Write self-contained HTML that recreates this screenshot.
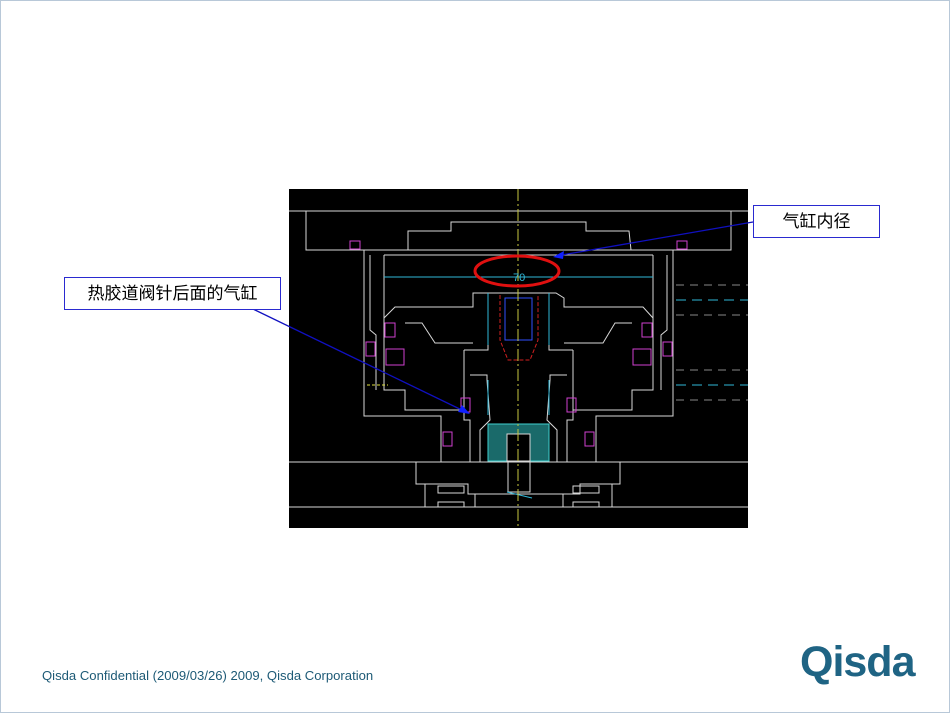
<!DOCTYPE html>
<html><head><meta charset="utf-8"><style>
html,body{margin:0;padding:0;background:#fff}
#p{position:relative;width:948px;height:711px;border:1px solid #b8c8d8;overflow:hidden;background:#fff}
.lbl{position:absolute;background:#fff;border:1px solid #2a2ad0;font-family:"Liberation Sans","Noto Sans CJK SC",sans-serif;font-size:17px;color:#000;text-align:center;box-sizing:border-box}
.ft{position:absolute;left:41px;top:667px;font-family:"Liberation Sans",sans-serif;font-size:13.1px;color:#1d5a76}
.logo{position:absolute;left:799px;top:637px;font-family:"Liberation Sans",sans-serif;font-size:43px;font-weight:bold;color:#1f6484;letter-spacing:-1px}
</style></head><body><div id="p">
<svg width="950" height="713" style="position:absolute;left:-1px;top:-1px">
<rect x="289" y="189" width="459" height="339" fill="#000"/>
<g fill="none" stroke="#d8d8d8" stroke-width="1">
<line x1="289" y1="211" x2="748" y2="211"/>
<polyline points="306,211 306,250 364,250"/>
<polyline points="731,211 731,250 673,250"/>
<polyline points="408,250 408,231 451,231 451,222 586,222 586,231 629,231 631,250"/>
<line x1="364" y1="250" x2="673" y2="250"/>
<polyline points="364,250 364,416 441,416 441,462"/>
<polyline points="673,250 673,416 596,416 596,462"/>
<polyline points="370,255 370,330 376,335 376,390"/>
<polyline points="667,255 667,330 661,335 661,390"/>
<polyline points="384,255 653,255"/>
<polyline points="384,255 384,390 405,390 405,410 464,410"/>
<polyline points="653,255 653,390 632,390 632,410 573,410"/>
<polyline points="384,318 395,307 473,307 473,293 480,293 556,293 564,298 564,307 643,307 653,318"/>
<polyline points="405,323 422,323 435,343 473,343"/>
<polyline points="632,323 615,323 603,343 564,343"/>
<polyline points="464,350 464,420 470,420 470,462"/>
<polyline points="573,350 573,420 567,420 567,462"/>
<polyline points="464,350 488,350 488,308"/>
<polyline points="573,350 549,350 549,308"/>
<polyline points="470,375 487,375 487,380 490,420 480,430 480,462"/>
<polyline points="567,375 550,375 550,380 547,420 557,430 557,462"/>
<line x1="289" y1="462" x2="748" y2="462"/>
<polyline points="416,462 416,484 468,484 468,494 580,494 580,484 620,484 620,462"/>
<polyline points="425,484 425,507"/><polyline points="612,484 612,507"/>
<polyline points="475,494 475,507"/><polyline points="563,494 563,507"/>
<rect x="438" y="486" width="26" height="7"/><rect x="573" y="486" width="26" height="7"/>
<rect x="438" y="502" width="26" height="5"/><rect x="573" y="502" width="26" height="5"/>
<line x1="289" y1="507" x2="748" y2="507"/>
<polyline points="508,462 508,492 530,492 530,462"/>
</g>
<g fill="none" stroke="#d040d0" stroke-width="1">
<rect x="350" y="241" width="10" height="8"/><rect x="677" y="241" width="10" height="8"/>
<rect x="385" y="323" width="10" height="14"/><rect x="642" y="323" width="10" height="14"/>
<rect x="366" y="342" width="9" height="14"/><rect x="663" y="342" width="9" height="14"/>
<rect x="386" y="349" width="18" height="16"/><rect x="633" y="349" width="18" height="16"/>
<rect x="461" y="398" width="9" height="14"/><rect x="567" y="398" width="9" height="14"/>
<rect x="443" y="432" width="9" height="14"/><rect x="585" y="432" width="9" height="14"/>
</g>
<g fill="none" stroke="#30b8d8" stroke-width="1">
<line x1="384" y1="277" x2="653" y2="277"/>
<polyline points="488,293 488,345"/><polyline points="549,293 549,345"/>
<polyline points="488,380 488,415"/><polyline points="549,380 549,415"/>
<line x1="676" y1="300" x2="748" y2="300" stroke-dasharray="10,6"/>
<line x1="676" y1="385" x2="748" y2="385" stroke-dasharray="10,6"/>
<line x1="507" y1="492" x2="532" y2="498"/>
</g>
<g stroke="#888" stroke-dasharray="8,6"><line x1="676" y1="285" x2="748" y2="285"/><line x1="676" y1="315" x2="748" y2="315"/><line x1="676" y1="370" x2="748" y2="370"/><line x1="676" y1="400" x2="748" y2="400"/></g>
<rect x="488" y="424" width="61" height="37" fill="#1a6a6a" stroke="#40d0d0"/>
<rect x="507" y="434" width="23" height="27" fill="#000" stroke="#d8d8d8"/>
<g fill="none" stroke="#d02020" stroke-dasharray="4,2"><polyline points="500,295 500,340 508,360 530,360 538,340 538,295"/></g>
<g fill="none" stroke="#3050ff"><rect x="505" y="298" width="27" height="42"/></g>
<line x1="518" y1="189" x2="518" y2="528" stroke="#c8c840" stroke-dasharray="12,3,2,3"/>
<line x1="367" y1="385" x2="388" y2="385" stroke="#e0e040" stroke-dasharray="3,2"/>
<text x="513" y="281" font-family="Liberation Sans" font-size="11" fill="#30b8d8">70</text>
<ellipse cx="517" cy="271" rx="42" ry="15" fill="none" stroke="#e01010" stroke-width="3"/>
<g stroke="#1010c0" stroke-width="1.3"><line x1="753" y1="222" x2="556" y2="256"/><line x1="253" y1="309" x2="468" y2="413"/></g>
<polygon points="553,257 564,251 563,259" fill="#1020ff"/>
<polygon points="470,414 458,412 462,405" fill="#1020ff"/>
</svg>
<div class="lbl" style="left:752px;top:204px;width:127px;height:33px;line-height:31px">气缸内径</div>
<div class="lbl" style="left:63px;top:276px;width:217px;height:33px;line-height:31px">热胶道阀针后面的气缸</div>
<div class="ft">Qisda Confidential (2009/03/26) 2009, Qisda Corporation</div>
<div class="logo">Qisda</div>
</div></body></html>
